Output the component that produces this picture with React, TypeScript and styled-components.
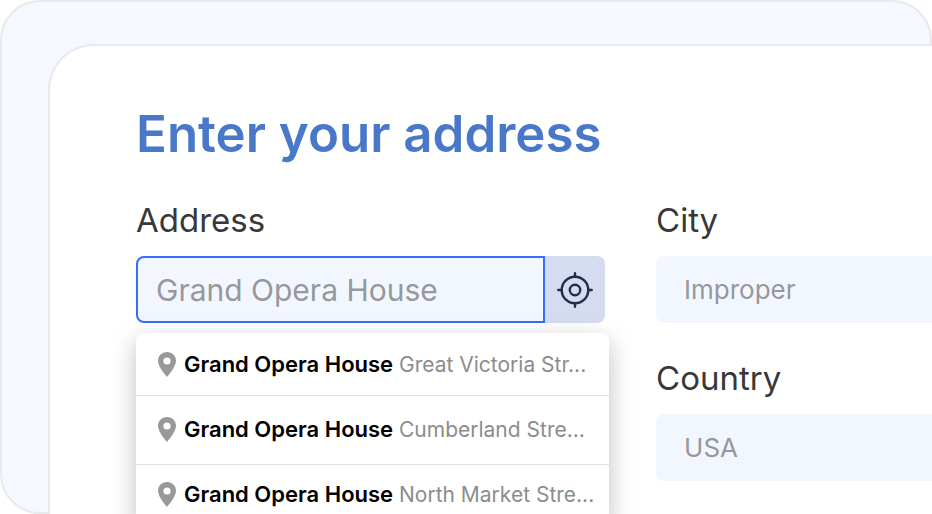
import React from "react";
import styled, { createGlobalStyle } from "styled-components";

const GlobalStyle = createGlobalStyle`
  *, *::before, *::after { box-sizing: border-box; }
  body {
    margin: 0;
    background: #ffffff;
    font-family: Inter, "Open Sans", sans-serif;
    color: #383838;
    overflow: hidden;
  }
  button, input { font: inherit; }
`;

const Frame = styled.div`
  height: 100vh;
  display: grid;
  padding: 42px 0 0 46px;
  background: #f5f8ff;
  border: 2px solid #e8e9ee;
  border-radius: 40px;
`;

const Panel = styled.main`
  min-width: 0;
  min-height: 0;
  margin: 0 -2px -2px 0;
  padding: 52px 0 0 86px;
  overflow: hidden;
  background: #ffffff;
  border: solid #e8e9ee;
  border-width: 2px 0 0 2px;
  border-radius: 46px 0 0 0;
`;

const Title = styled.h1`
  margin: 0 0 26px;
  font-size: 51px;
  line-height: 72px;
  font-weight: 600;
  color: #4a78c9;
  white-space: nowrap;
`;

const Form = styled.form`
  display: grid;
  grid-template-columns: minmax(0, 17fr) minmax(0, 10fr);
  gap: 51px;
  align-items: start;
`;

const Column = styled.div`
  display: flex;
  flex-direction: column;
  gap: 31px;
`;

const Field = styled.div`
  display: flex;
  flex-direction: column;
  gap: 12px;
`;

const Label = styled.label`
  font-size: 33px;
  line-height: 48px;
`;

const TextInput = styled.input`
  width: 100%;
  height: 67px;
  padding: 0 28px;
  border: 0;
  border-radius: 8px 0 0 8px;
  outline: 0;
  background: #f2f7ff;
  color: #96989c;
  font-size: 26px;
`;

const SearchInput = styled(TextInput)`
  flex: 1;
  min-width: 0;
  padding: 0 18px;
  border: 2px solid #336eff;
  font-size: 30px;
`;

const SearchRow = styled.div`
  display: flex;
`;

const LocateButton = styled.button`
  display: grid;
  place-items: center;
  width: 60px;
  padding: 0;
  border: 0;
  border-radius: 0 8px 8px 0;
  background: #d6dcf0;
  color: #222b50;
`;

const Combo = styled.div`
  display: flex;
  flex-direction: column;
  gap: 10px;
`;

const Suggestions = styled.ul`
  margin: 0 -4px 0 0;
  padding: 0;
  list-style: none;
  background: #ffffff;
  border-radius: 8px;
  box-shadow: 0 8px 24px rgba(0, 0, 0, 0.25);
`;

const Suggestion = styled.li`
  display: flex;
  align-items: center;
  gap: 8px;
  height: 69px;
  padding: 0 8px 2px 22px;
  border-bottom: 1px solid #e0e0e0;
  font-size: 21px;
  line-height: 30px;
  white-space: nowrap;
  color: #8c8c8c;

  &:first-child {
    height: 63px;
    padding-bottom: 0;
  }

  &:last-child {
    height: 60px;
    border-bottom: 0;
  }
`;

const Place = styled.strong`
  font-size: 22px;
  font-weight: 600;
  color: #000000;
`;

const PinIcon = styled.svg`
  flex: none;
`;

const Pin = () => (
  <PinIcon width="18" height="25" viewBox="0 0 18 25" aria-hidden="true">
    <path
      fill="#999999"
      fillRule="evenodd"
      d="M9 0C4 0 0 3.9 0 8.8C0 15.2 9 25 9 25S18 15.2 18 8.8C18 3.9 14 0 9 0ZM9 5.4A3.6 3.6 0 1 1 9 12.6A3.6 3.6 0 1 1 9 5.4Z"
    />
  </PinIcon>
);

const Crosshair = () => (
  <svg
    width="36"
    height="36"
    viewBox="0 0 36 36"
    fill="none"
    stroke="currentColor"
    strokeWidth="2.4"
    strokeLinecap="round"
    aria-hidden="true"
  >
    <circle cx="18" cy="18" r="13.3" />
    <circle cx="18" cy="18" r="5.2" />
    <path d="M18 1.3V4.5M18 31.5V34.7M1.3 18H4.5M31.5 18H34.7" />
  </svg>
);

const suggestions = [
  { place: "Grand Opera House", street: "Great Victoria Str..." },
  { place: "Grand Opera House", street: "Cumberland Stre..." },
  { place: "Grand Opera House", street: "North Market Stre..." },
];

export default function App() {
  return (
    <>
      <GlobalStyle />
      <Frame>
        <Panel>
          <Title>Enter your address</Title>
          <Form>
            <Field>
              <Label htmlFor="address">Address</Label>
              <Combo>
                <SearchRow>
                  <SearchInput id="address" defaultValue="Grand Opera House" />
                  <LocateButton type="button" aria-label="Use my location">
                    <Crosshair />
                  </LocateButton>
                </SearchRow>
                <Suggestions>
                  {suggestions.map(({ place, street }) => (
                    <Suggestion key={street}>
                      <Pin />
                      <span>
                        <Place>{place}</Place> {street}
                      </span>
                    </Suggestion>
                  ))}
                </Suggestions>
              </Combo>
            </Field>
            <Column>
              <Field>
                <Label htmlFor="city">City</Label>
                <TextInput id="city" defaultValue="Improper" />
              </Field>
              <Field>
                <Label htmlFor="country">Country</Label>
                <TextInput id="country" defaultValue="USA" />
              </Field>
            </Column>
          </Form>
        </Panel>
      </Frame>
    </>
  );
}
